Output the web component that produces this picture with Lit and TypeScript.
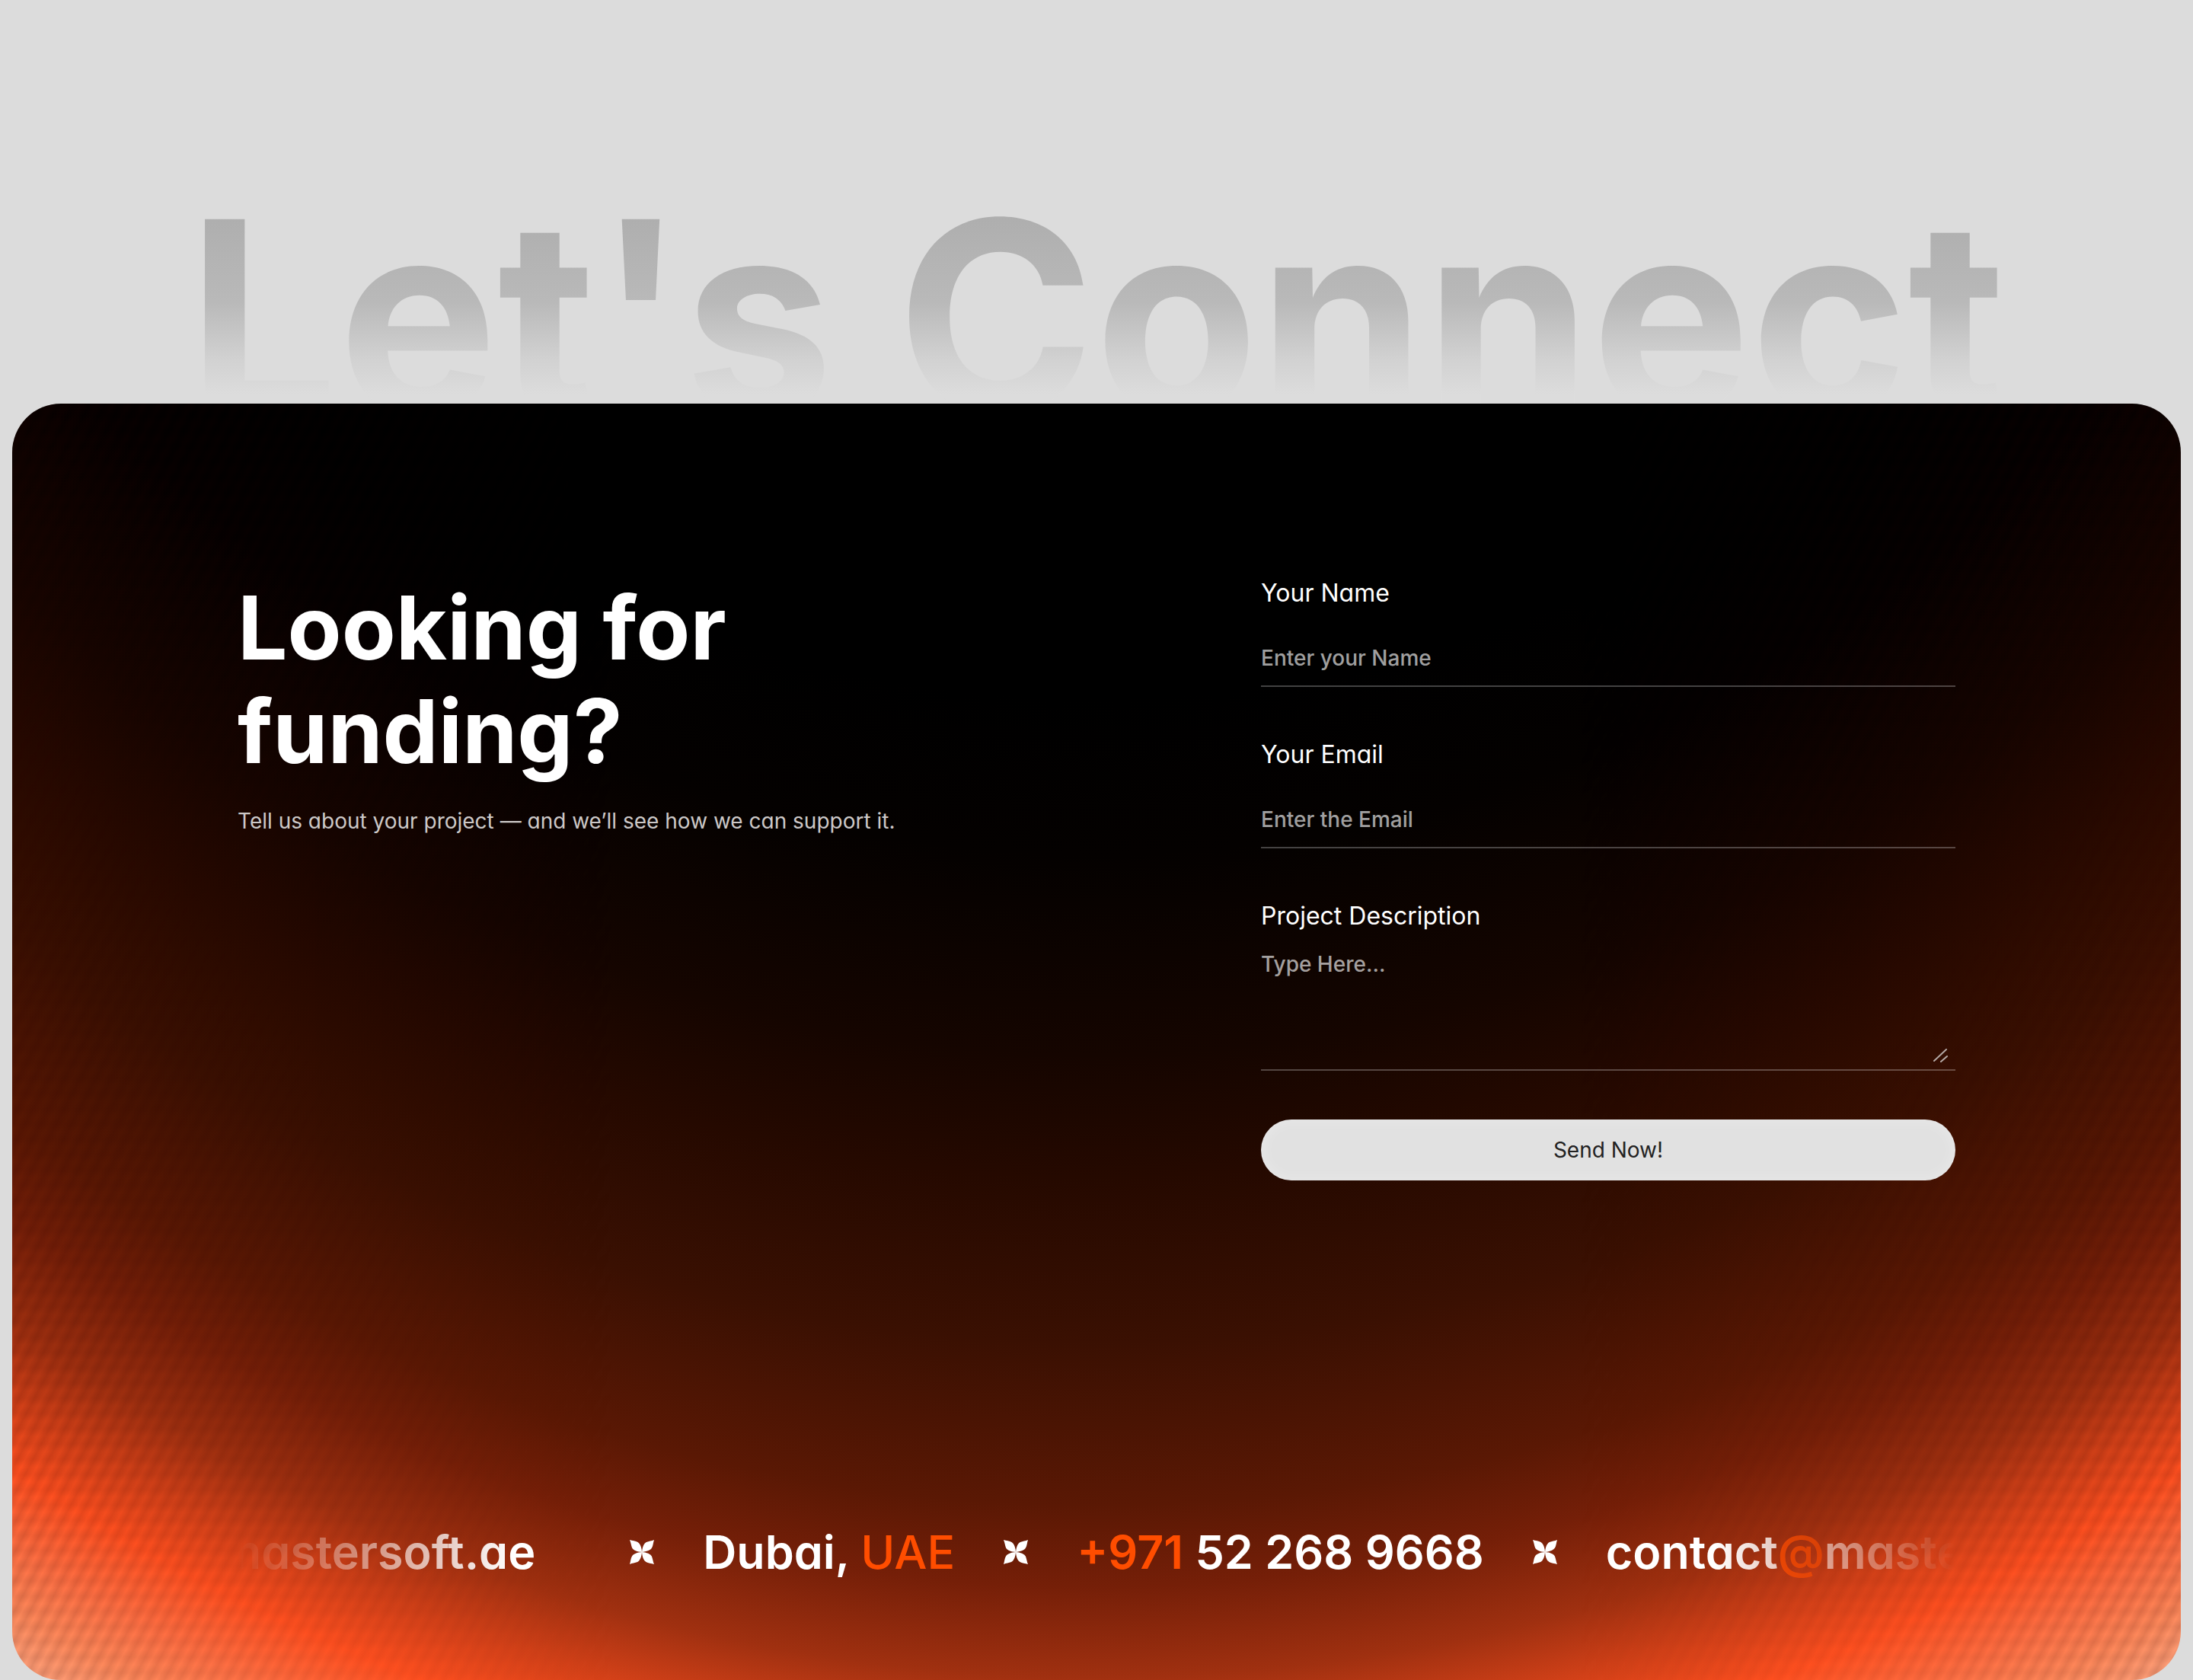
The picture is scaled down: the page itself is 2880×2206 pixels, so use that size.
import { LitElement, html, css, svg } from "lit";
import { customElement } from "lit/decorators.js";

const star = html`<svg class="star" viewBox="0 0 32 32" aria-hidden="true">
  ${[0, 90, 180, 270].map(
    (a) => svg`<path transform="rotate(${a} 16 16)" d="M16 16C10 15.600 4.400 13.400 3 10.200C1.800 7 1.400 3.200 0 0C3.600 1.200 7.800 1.200 10.600 3C13.800 5 15.600 10 16 16Z"/>`
  )}
</svg>`;

const mail = html`<a class="item mail" href="mailto:contact@mastersoft.ae">contact<em>@</em>mastersoft.ae</a>`;

@customElement("app-root")
export class AppRoot extends LitElement {
  static styles = css`
    :host {
      display: block;
      min-height: 100vh;
      background: #dcdcdc;
      color: #fff;
      font-family: Inter, "Liberation Sans", sans-serif;
      font-feature-settings: "cv11";
    }
    * {
      box-sizing: border-box;
    }
    .hero {
      height: 530px;
      padding-top: 174px;
      overflow: hidden;
      text-align: center;
    }
    .hero h1 {
      margin: 0;
      font-size: 351px;
      line-height: 484px;
      font-weight: 700;
      white-space: nowrap;
      color: transparent;
      background: linear-gradient(#aeaeae 22%, #b9b9b9 46%, #d2d2d2 62%, #dcdcdc 71%);
      background-clip: text;
      -webkit-background-clip: text;
    }
    .card {
      position: relative;
      overflow: hidden;
      margin: 0 16px;
      min-height: 1676px;
      padding: 224px 296px 128px;
      border-radius: 64px;
      display: flex;
      flex-direction: column;
      justify-content: space-between;
      background: radial-gradient(
        115% 245% at 50% -119%,
        #000 58%,
        #040100 63%,
        #150500 69.4%,
        #250900 73.3%,
        #3a1002 78.6%,
        #5a1804 83.8%,
        #751f08 86.4%,
        #a03010 89.3%,
        #d04018 91.3%,
        #ff5020 93.4%,
        #ff7044 95.6%,
        #ff8a5c 97.4%,
        #ffa27c 99%
      );
    }
    .card::before {
      content: "";
      position: absolute;
      inset: 0;
      background: repeating-linear-gradient(118deg, transparent 0, rgba(40, 0, 0, 0.12) 9px, transparent 18px),
        repeating-linear-gradient(0deg, transparent 0, rgba(40, 0, 0, 0.06) 10px, transparent 20px);
      mask-image: linear-gradient(90deg, #000, transparent 28%, transparent 72%, #000);
    }
    .columns,
    .ticker {
      position: relative;
    }
    .columns {
      display: flex;
      justify-content: space-between;
      gap: 64px;
    }
    .intro {
      padding-top: 2px;
    }
    .intro h2 {
      margin: 0;
      font-size: 116px;
      line-height: 136px;
      font-weight: 700;
    }
    .intro p {
      margin: 30px 0 0;
      font-size: 28px;
      line-height: 40px;
      color: #ccc8c7;
    }
    form {
      flex: 0 1 912px;
      display: flex;
      flex-direction: column;
    }
    label {
      font-size: 32px;
      line-height: 50px;
    }
    input,
    textarea {
      display: block;
      width: 100%;
      padding: 0;
      border: 0;
      border-bottom: 2px solid rgba(255, 255, 255, 0.26);
      border-radius: 0;
      background: none;
      color: #fff;
      outline: 0;
      font: 500 28px/40px Inter, "Liberation Sans", sans-serif;
    }
    ::placeholder {
      color: rgba(255, 255, 255, 0.64);
      opacity: 1;
    }
    input {
      height: 98px;
      padding-top: 24px;
      margin-bottom: 64px;
    }
    .area {
      position: relative;
      margin-bottom: 64px;
    }
    textarea {
      height: 178px;
      padding-top: 18px;
      resize: none;
    }
    .grip {
      position: absolute;
      right: 10px;
      bottom: 10px;
      width: 20px;
      height: 20px;
      stroke: #b5aaa6;
      stroke-width: 2;
      stroke-linecap: round;
    }
    button {
      height: 80px;
      border: 0;
      border-radius: 40px;
      background: #e1e1e1;
      box-shadow: inset 0 0 20px rgba(255, 255, 255, 0.3);
      color: #222;
      font: 400 28px/40px Inter, "Liberation Sans", sans-serif;
    }
    .ticker {
      display: flex;
      align-items: center;
      justify-content: center;
      gap: 64px;
      overflow: hidden;
      height: 80px;
      mask-image: linear-gradient(90deg, transparent, #000 16%, #000 86%, transparent);
    }
    .item {
      flex: none;
      color: #fff;
      text-decoration: none;
      font-size: 61px;
      line-height: 80px;
      font-weight: 600;
      white-space: nowrap;
    }
    .mail {
      margin-right: 60px;
    }
    .mail:last-child {
      margin-right: 68px;
    }
    em {
      font-style: normal;
      color: #ff4d00;
    }
    .light {
      font-weight: 500;
    }
    .star {
      flex: none;
      width: 32px;
      height: 32px;
      fill: #fff;
    }
  `;

  render() {
    return html`
      <header class="hero"><h1>Let's Connect</h1></header>
      <main class="card">
        <div class="columns">
          <section class="intro">
            <h2>Looking for<br />funding?</h2>
            <p>Tell us about your project — and we’ll see how we can support it.</p>
          </section>
          <form @submit=${(e: Event) => e.preventDefault()}>
            <label for="name">Your Name</label>
            <input id="name" type="text" placeholder="Enter your Name" />
            <label for="email">Your Email</label>
            <input id="email" type="email" placeholder="Enter the Email" />
            <label for="about">Project Description</label>
            <div class="area">
              <textarea id="about" placeholder="Type Here..."></textarea>
              <svg class="grip" viewBox="0 0 20 20" aria-hidden="true"><path d="M2 17L18 2M11 18L19 11" /></svg>
            </div>
            <button type="submit">Send Now!</button>
          </form>
        </div>
        <div class="ticker">
          ${mail}${star}
          <span class="item">Dubai, <em class="light">UAE</em></span>${star}
          <a class="item" href="tel:+971522689668"><em>+971</em> 52 268 9668</a>${star}
          ${mail}
        </div>
      </main>
    `;
  }
}
